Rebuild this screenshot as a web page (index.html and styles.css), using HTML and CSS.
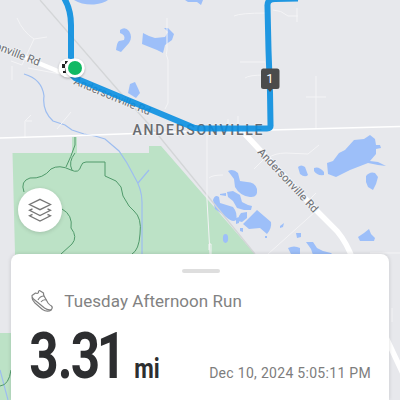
FILE: index.html
```html
<!DOCTYPE html>
<html lang="en">
<head>
<meta charset="utf-8">
<title>Tuesday Afternoon Run</title>
<link rel="stylesheet" href="styles.css">
</head>
<body>
<main class="screen">
  <svg class="map" viewBox="0 0 400 400">
    <g class="park">
      <path d="M12.500 153H149V146H161L255 254V400H11.500V333H0V400H15L15 254Z"/>
      <path d="M0 333H30V400H0Z"/>
      <path d="M72 137H77V154H72Z"/>
    </g>
    <g class="water">
      <path d="M74 0Q82 5 94 4.500Q104 3 108 0Z"/>
      <path d="M120 30Q125 26 129 31Q133 37 129 43L121 52L116 50Q117 42 119 41L124 40Q126 35 120 33Z"/>
      <path d="M130 84L135 82Q138 88 140 93L136 98L128 93Z"/>
      <path d="M143 33L149 36L155 38L165 37L168 32L164 28L168 28L174 34L172 40L165 45L163 53L157 50L142 44Z"/>
      <path d="M185 0H203L201 5L197 2L188 2Z"/>
      <path d="M228 171Q233 168 238 173L240 181L247 182Q255 182 257 189Q258 198 250 197Q240 196 235 187L234 179Z"/>
      <path d="M220 194L226 193V196L220 195ZM227 192L233 191L240 195L242 202L248 205L252 206L251 210L244 210L237 208L233 201L228 197Z"/>
      <path d="M213 200Q215 194 219 197L220 203L233 207Q238 213 236 220Q233 223 226 217L215 209Z"/>
      <path d="M241 213L247 212L247 218L242 222L238 221L239 216ZM236 218L239 217L239 223L236 224ZM240 228H243V232L240 231Z"/>
      <path d="M243 224L257 210L271 222Q272 228 267 234L260 228L249 229Z"/>
      <path d="M280 226L284 223L283 227L280 228ZM265 236H267V238H265Z"/>
      <ellipse cx="225.500" cy="238.500" rx="2.600" ry="4.400"/>
      <path d="M298 167Q301 164 305 167L308 175Q305 178 300 174ZM314 168Q319 166 324 172V175Q317 176 314 171Z"/>
      <path d="M327 163L333 161L339 153L345 150L354 140L364 139L370 135L375 139L376 145L380 145L381 148L376 149L376 154L370 161L378 162L386 166L378 165L368 163L350 170L336 177L328 174Z"/>
      <path d="M366 176Q370 171 375 173L378 177L376 184L373 190L368 187L366 182Z"/>
      <path d="M358 237L364 233L369 229L371 234L375 238L374 241L360 241Z"/>
      <path d="M296 233L301 233L301 237L297 238ZM288 248Q294 245 300 248L300 254H291ZM306 242L313 242L317 248L323 251L331 253L333 255H313L311 249Z"/>
    </g>
    <g class="stream">
      <path d="M24 74Q42 79 44 96Q42 111 53 121L65 125L72 130L84 134L95 136L105 139L119 151L127 163L134 176Q142 189 142 202V254M138 183L149 170M0 370L8 400"/>
    </g>
    <g class="trail">
      <path d="M75 137V145Q71 157 66 167M75 153Q68 162 72 170M71 170Q59 164 51 169Q43 179 30 178Q20 181 24 192M62 209Q73 215 71 228Q78 237 72 244L61 254M71 170Q79 174 81 166Q82 162 86 162H105V176L116 181L121 187L123 196L129 206L134 211Q142 218 140 234Q139 250 132 254M0 386Q9 385 11 370"/>
    </g>
    <g class="rail">
      <path d="M40 0L118 90L154 130L255 254"/>
    </g>
    <g class="lane">
      <path d="M17 18Q23 32 34 39L47 37M34 39L22 65L11 61M12 66V80M25 138V121L31 115M26 121H32M57 129L71 112M28 68L60 74"/>
      <path d="M167 18V50Q165 54 168 60V103L165 109M234 16Q240 13 267 13M240 62H265M245 78Q249 75 265 75M228 119V128M238 116V128M273 10Q281 10 288 16H298M297 8V22"/>
      <path d="M316 76V129M306 97H326M207 132V200L210 254M209 178Q212 175 223 175M209 250V244H211V254M254 169L265 158M268 158Q275 153 286 153L308 154L319 145M268 254L316 211M316 211L307 202M316 193L307 202M370 253H400M392 308V322"/>
    </g>
    <g class="road">
      <path class="road-thin" d="M0 138L80 135.500L175 132L270 130L400 126.500"/>
      <path d="M0 47L72 77L194 128L242 131"/>
      <path class="road-main" d="M243 132L300 193L318 212L337 231Q347 243 353 260L376 316L406 380"/>
    </g>
    <g class="street-label">
      <text transform="translate(-38 36) rotate(21.500)" textLength="82">Andersonville Rd</text>
      <text transform="translate(257 152.500) rotate(47)" textLength="83">Andersonville Rd</text>
      <text transform="translate(73 84) rotate(22.500)" textLength="82">Andersonville Rd</text>
    </g>
    <text class="town-label" x="132.500" y="135.200" textLength="130">ANDERSONVILLE</text>
    <path class="route" d="M63.500 -3Q71 9 71 25V74L75 78L190 126Q194 128.500 200 128.500H267Q271 128.500 270.500 125L270 92L268.500 50L267.500 6Q267 -1 275 -1L298 -1.500"/>
    <circle class="marker-ring" cx="68" cy="68" r="9.500"/>
    <path class="finish" d="M65 61H68V64H65ZM62 64H65V68H62ZM65 68H67V71H65ZM63 71H66V73H63Z"/>
    <circle class="marker-ring" cx="75" cy="68" r="9.800"/>
    <circle class="start" cx="75" cy="68" r="7"/>
    <path class="mile" d="M263 68.500H277Q279.500 68.500 279.500 71V86.500Q279.500 89 277 89H272.500L270 92L267.500 89H263.500Q261 89 261 86.500V71Q261 68.500 263 68.500Z"/>
    <text class="mile-text" x="270" y="83.200">1</text>
  </svg>
  <button class="layers" aria-label="Map layers">
    <svg viewBox="0 0 24 24"><path d="M12 1.300L22.500 6.500L12 11.700L1.500 6.500ZM4.500 10.800L1.500 12.300L12 17.500L22.500 12.300L19.500 10.800M4.500 16.300L1.500 17.800L12 23L22.500 17.800L19.500 16.300"/></svg>
  </button>
  <section class="card">
    <div class="handle"></div>
    <div class="title">
      <svg class="shoe" viewBox="0 0 24 24"><path d="M2 6.500L5.500 4Q7.500 5 8.500 3.500Q8 2 9.500 1.500L13.500 4Q13 6 15.500 9.500L18 14Q19.500 16 21.500 17Q23 18.500 21.500 20.500Q18 21.500 14.500 19L3.500 10Q1.500 8 2 6.500Z"/><path d="M2 8.500Q2 11 5 14L12.500 20.500Q17 23.500 21.500 21M8 11Q10 7 14 7M11 13Q13 10 16.500 11"/></svg>
      <h1>Tuesday Afternoon Run</h1>
    </div>
    <div class="stats">
      <svg class="distance" viewBox="0 0 134 52"><text class="value" transform="scale(.8 1)" x="-1 34.800 51 83.500" y="48">3.31</text><text class="unit" x="104.300" y="48" textLength="25.500" lengthAdjust="spacingAndGlyphs">mi</text></svg>
      <time>Dec 10, 2024 5:05:11 PM</time>
    </div>
  </section>
</main>
</body>
</html>
```
FILE: styles.css
```css
* { box-sizing: border-box; }
body { margin: 0; font-family: Roboto, sans-serif; }
.screen {
  position: relative;
  width: 400px;
  height: 400px;
  overflow: hidden;
  background: #e7e8ec;
  display: flex;
  flex-direction: column;
  justify-content: space-between;
  padding: 188px 11px 0;
}
.map { position: absolute; inset: 0; width: 400px; height: 400px; }
.park { fill: #bce2c6; }
.water { fill: #9dbff9; }
.stream { fill: none; stroke: #9dbdf0; stroke-width: 1.2; }
.trail { fill: none; stroke: #509a6b; stroke-width: 1; }
.rail { fill: none; stroke: #d4d6d8; stroke-width: 1.3; }
.lane { fill: none; stroke: #f4f4f6; stroke-width: 1; }
.road { fill: none; stroke: #fff; stroke-width: 4.5; }
.road .road-thin { stroke-width: 1.6; }
.road .road-main { stroke-width: 5.5; }
.street-label { font-size: 11px; fill: #6b6e72; stroke: #eff0f2; stroke-width: 1.6; paint-order: stroke; }
.town-label { font-size: 14px; font-weight: 500; fill: #686b70; stroke: #eff0f2; stroke-width: 1.5; paint-order: stroke; }
.route { fill: none; stroke: #098ee0; stroke-opacity: .9; stroke-width: 6; stroke-linejoin: round; }
.marker-ring { fill: #fff; filter: drop-shadow(0 1px 1px rgba(0, 0, 0, .25)); }
.finish { fill: #222; }
.start { fill: #10b963; }
.mile { fill: #4b4b4b; }
.mile-text { font-size: 13px; fill: #fff; text-anchor: middle; }
.layers {
  position: relative;
  width: 44px;
  height: 44px;
  margin-left: 7px;
  padding: 0;
  border: 0;
  border-radius: 50%;
  background: #fff;
  box-shadow: 0 1px 4px rgba(0, 0, 0, .15);
  display: grid;
  place-items: center;
}
.layers svg { width: 24px; height: 24px; fill: none; stroke: #767676; stroke-width: 1.3; }
.card {
  position: relative;
  height: 146px;
  padding: 15px 18px 0 19px;
  border-radius: 8px 8px 0 0;
  background: #fff;
  box-shadow: 0 0 4px rgba(0, 0, 0, .14);
}
.handle { width: 38px; height: 4px; margin: 0 auto; border-radius: 2px; background: #dedede; }
.title { display: flex; align-items: center; gap: 10.300px; height: 24px; margin-top: 16px; }
.shoe { width: 24px; height: 24px; fill: none; stroke: #808080; stroke-width: 1.2; stroke-linejoin: round; }
h1 { margin: 0; font-size: 17px; font-weight: 400; letter-spacing: .06px; color: #828282; white-space: nowrap; }
.stats { display: flex; justify-content: space-between; align-items: flex-end; height: 54px; margin-top: 17px; }
.distance { width: 134px; height: 52px; margin-bottom: 2px; overflow: visible; fill: #2d2e30; font-weight: 700; }
.value { font-size: 64px; }
.unit { font-size: 28px; }
time { margin-bottom: 2px; font-size: 14px; line-height: 18px; letter-spacing: .3px; color: #7d7d7d; white-space: nowrap; }
```
